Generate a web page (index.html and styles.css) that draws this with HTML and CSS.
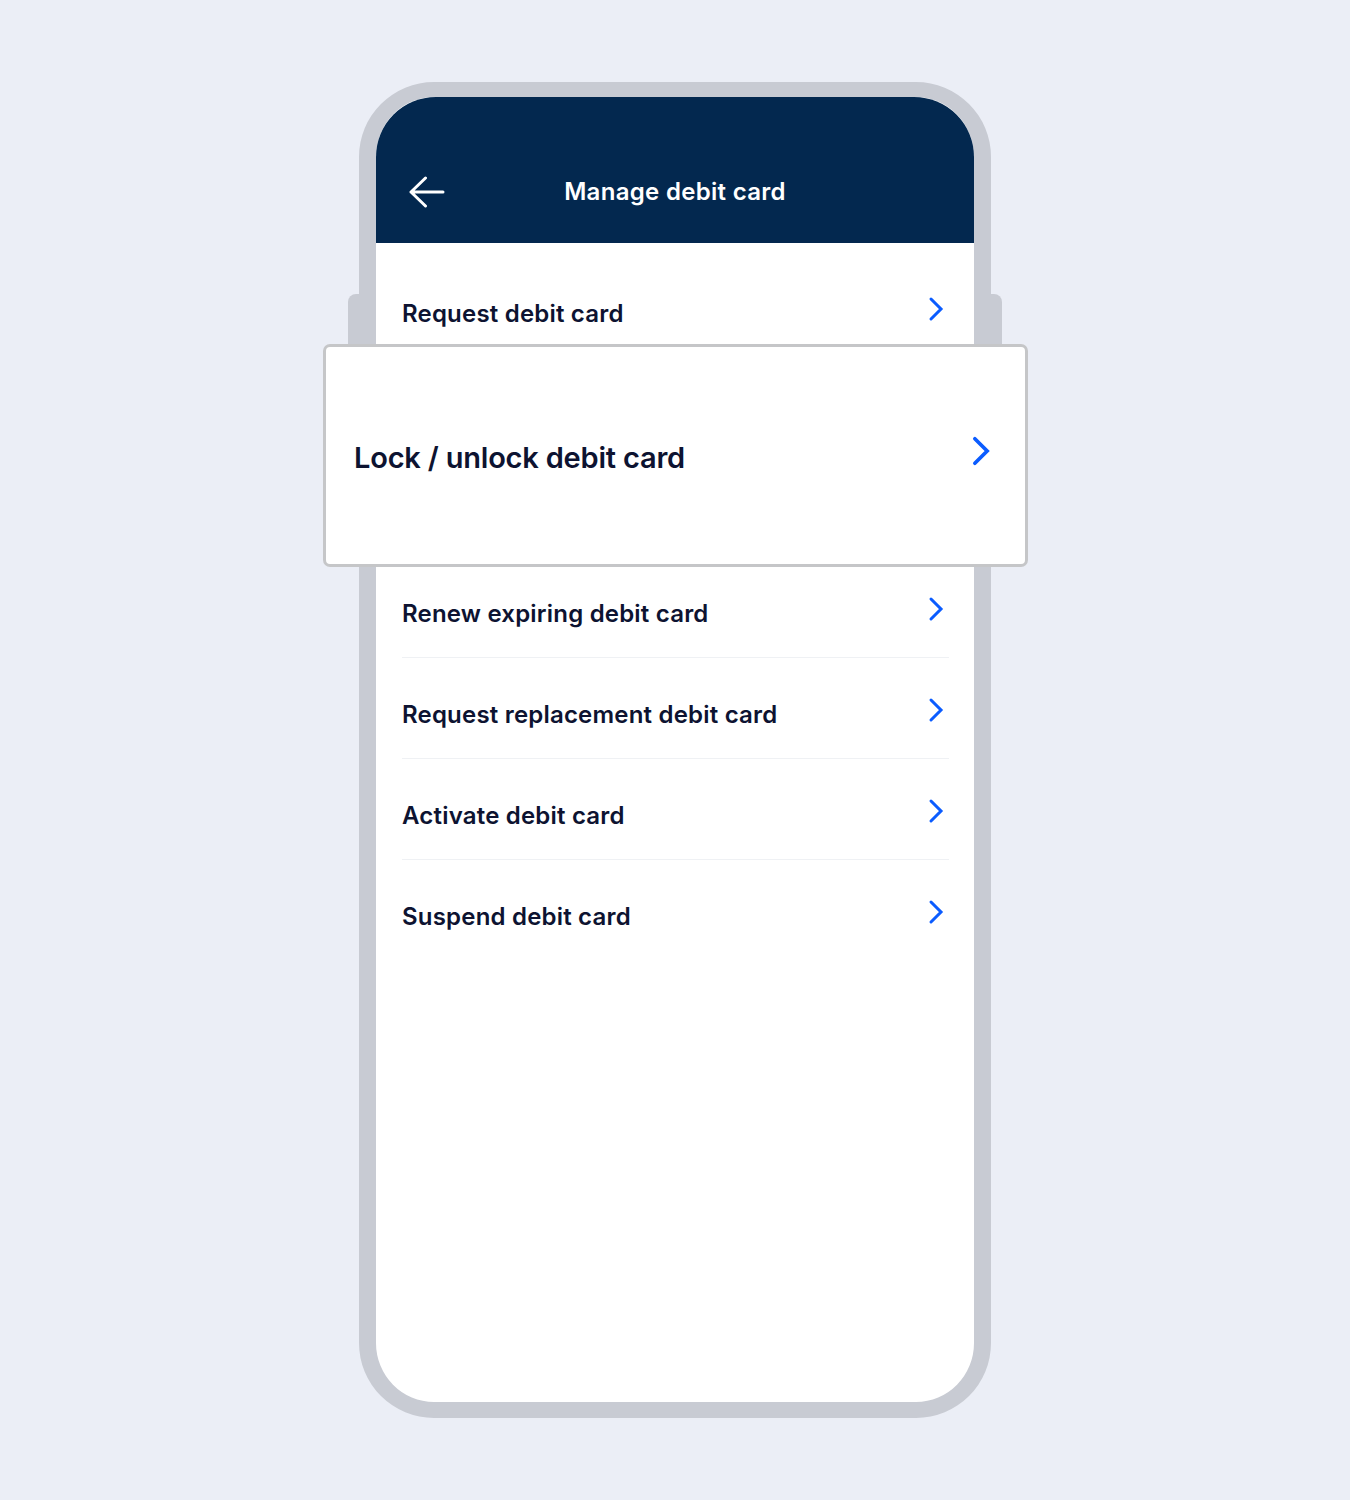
FILE: index.html
```html
<!DOCTYPE html>
<html lang="en">
<head>
  <meta charset="UTF-8" />
  <meta name="viewport" content="width=device-width, initial-scale=1.0"/>
  <title>Manage debit card</title>
  <link rel="stylesheet" href="styles.css">
</head>
<body>
  <div class="stage">
    <div class="phone">
      <div class="topbar">
        <a class="back" href="#" aria-label="Back">
          <svg width="36" height="32" viewBox="0 0 36 32" fill="none">
            <path d="M16.5 2 L2 16 L16.5 30 M2 16 H34" stroke="#fff" stroke-width="3" stroke-linecap="round" stroke-linejoin="round"/>
          </svg>
        </a>
        <h1 class="title">Manage debit card</h1>
      </div>

      <div class="menu">
        <a class="row" href="#">
          <span>Request debit card</span>
          <svg class="chev" width="16" height="26" viewBox="0 0 16 26"><path d="M3 3 L13 13 L3 23" /></svg>
        </a>

        <a class="focus-card" href="#">
          <span>Lock / unlock debit card</span>
          <svg class="chev big" width="20" height="32" viewBox="0 0 16 26"><path d="M3 3 L13 13 L3 23" /></svg>
        </a>

        <a class="row" href="#">
          <span>Renew expiring debit card</span>
          <svg class="chev" width="16" height="26" viewBox="0 0 16 26"><path d="M3 3 L13 13 L3 23" /></svg>
        </a>
        <a class="row" href="#">
          <span>Request replacement debit card</span>
          <svg class="chev" width="16" height="26" viewBox="0 0 16 26"><path d="M3 3 L13 13 L3 23" /></svg>
        </a>
        <a class="row" href="#">
          <span>Activate debit card</span>
          <svg class="chev" width="16" height="26" viewBox="0 0 16 26"><path d="M3 3 L13 13 L3 23" /></svg>
        </a>
        <a class="row last" href="#">
          <span>Suspend debit card</span>
          <svg class="chev" width="16" height="26" viewBox="0 0 16 26"><path d="M3 3 L13 13 L3 23" /></svg>
        </a>
      </div>
    </div>
  </div>
</body>
</html>
```

FILE: styles.css
```css
body {
  margin: 0;
  background: #ebeef6;
  font-family: Inter, "Noto Sans", Arial, sans-serif;
}

.stage {
  display: flex;
  justify-content: center;
  padding-top: 82px;
  height: 1418px;
}

.phone {
  position: relative;
  box-sizing: border-box;
  width: 632px;
  height: 1336px;
  border: solid #c8cbd3;
  border-width: 15px 17px 16px;
  border-radius: 75px;
  background: #fff;
}

/* side buttons */
.phone::before,
.phone::after {
  content: "";
  position: absolute;
  top: 197px;
  width: 11px;
  height: 150px;
  background: #c8cbd3;
}
.phone::before {
  left: -28px;
  border-radius: 8px 0 0 0;
}
.phone::after {
  right: -28px;
  border-radius: 0 8px 0 0;
}

.topbar {
  position: relative;
  display: flex;
  align-items: center;
  justify-content: center;
  height: 146px;
  box-sizing: border-box;
  padding: 80px 34px 36px;
  background: #03284f;
  border-radius: 60px 60px 0 0;
}

.back {
  position: absolute;
  left: 33px;
  top: 79px;
  display: block;
  line-height: 0;
}

.title {
  margin: 0;
  color: #fff;
  font-size: 24px;
  line-height: 30px;
  font-weight: 600;
  letter-spacing: 0.3px;
}

.menu {
  padding: 14px 25px 0 26px;
}

.row {
  display: flex;
  justify-content: space-between;
  align-items: flex-start;
  box-sizing: border-box;
  height: 101px;
  padding-top: 42px;
  border-bottom: 1px solid #eff1f4;
  color: #0d1331;
  text-decoration: none;
  font-size: 24px;
  line-height: 30px;
  font-weight: 600;
  letter-spacing: 0.2px;
}
.row.last {
  border-bottom: none;
}

.chev {
  margin: -3px 5px 0 0;
  fill: none;
  stroke: #0b5cff;
  stroke-width: 3;
  stroke-linecap: round;
  stroke-linejoin: miter;
}

.focus-card {
  position: relative;
  z-index: 2;
  display: flex;
  justify-content: space-between;
  align-items: flex-start;
  box-sizing: border-box;
  height: 223px;
  margin: -14px -79px -10px;
  padding: 92px 34px 0 28px;
  background: #fff;
  border: 3px solid #c5c6c8;
  border-radius: 7px;
  color: #0d1331;
  text-decoration: none;
  font-size: 29px;
  line-height: 38px;
  font-weight: 600;
  letter-spacing: -0.2px;
}

.chev.big {
  margin: -4px 0 0 0;
  stroke-width: 3;
}
```
